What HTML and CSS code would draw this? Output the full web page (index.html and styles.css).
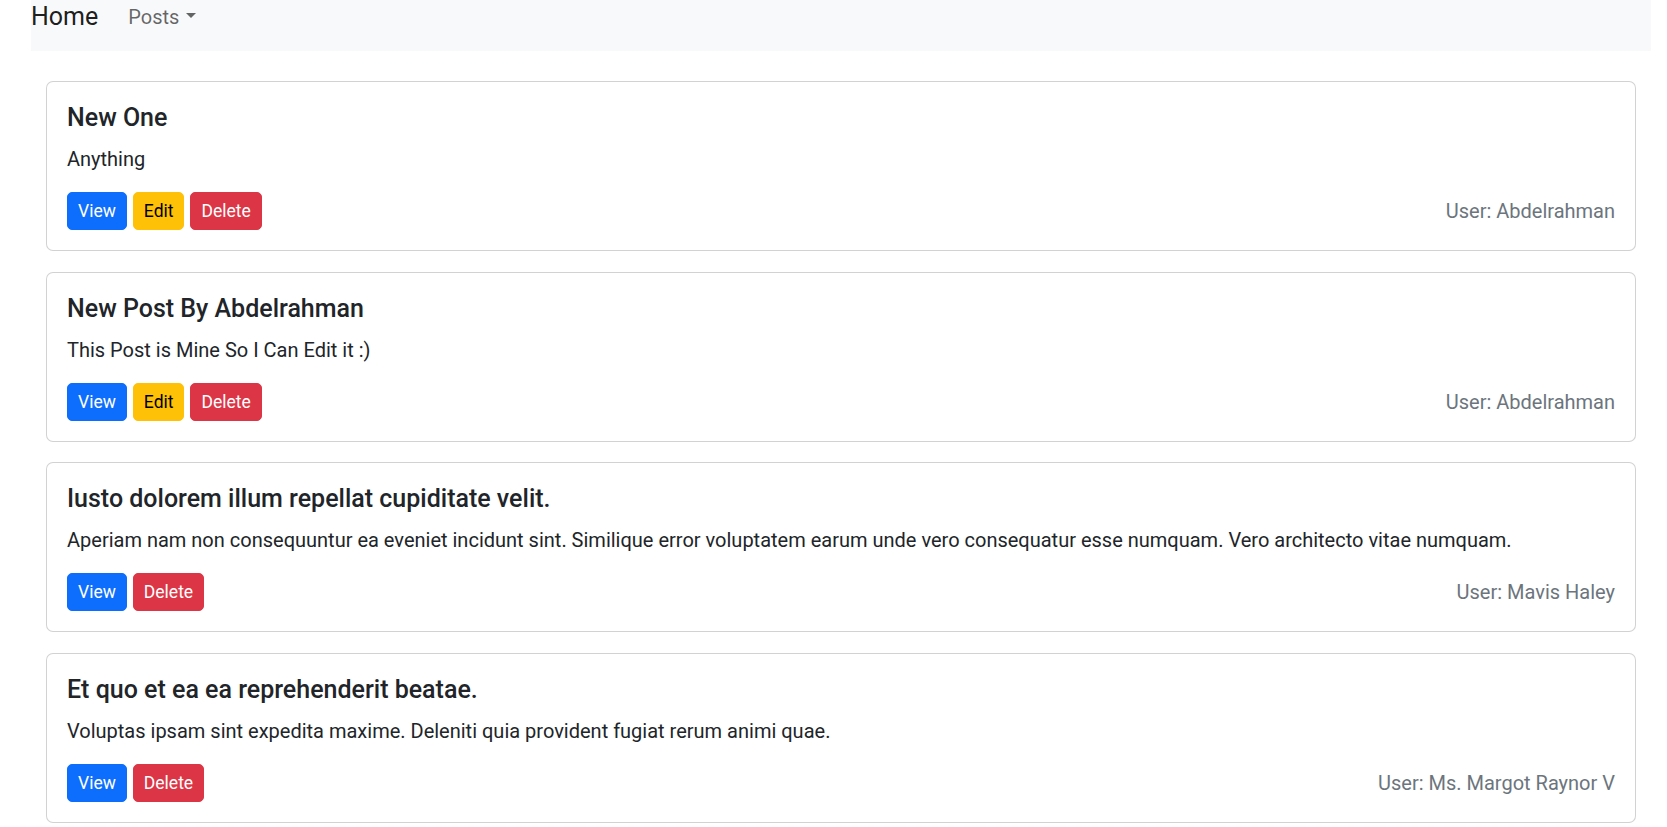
FILE: index.html
```html
<!DOCTYPE html>
<html lang="en">
<head>
<meta charset="utf-8">
<title>Posts</title>
<link rel="stylesheet" href="styles.css">
</head>
<body>
<div class="page">
  <nav class="navbar">
    <a class="brand" href="#">Home</a>
    <a class="nav-link" href="#">Posts<span class="caret"></span></a>
  </nav>
  <main class="container">
    <div class="card">
      <div class="card-body">
        <h5 class="card-title">New One</h5>
        <p class="card-text">Anything</p>
        <div class="card-footer">
          <div class="actions">
            <a class="btn btn-primary" href="#">View</a>
            <a class="btn btn-warning" href="#">Edit</a>
            <a class="btn btn-danger" href="#">Delete</a>
          </div>
          <span class="user">User: Abdelrahman</span>
        </div>
      </div>
    </div>
    <div class="card">
      <div class="card-body">
        <h5 class="card-title">New Post By Abdelrahman</h5>
        <p class="card-text">This Post is Mine So I Can Edit it :)</p>
        <div class="card-footer">
          <div class="actions">
            <a class="btn btn-primary" href="#">View</a>
            <a class="btn btn-warning" href="#">Edit</a>
            <a class="btn btn-danger" href="#">Delete</a>
          </div>
          <span class="user">User: Abdelrahman</span>
        </div>
      </div>
    </div>
    <div class="card">
      <div class="card-body">
        <h5 class="card-title">Iusto dolorem illum repellat cupiditate velit.</h5>
        <p class="card-text">Aperiam nam non consequuntur ea eveniet incidunt sint. Similique error voluptatem earum unde vero consequatur esse numquam. Vero architecto vitae numquam.</p>
        <div class="card-footer">
          <div class="actions">
            <a class="btn btn-primary" href="#">View</a>
            <a class="btn btn-danger" href="#">Delete</a>
          </div>
          <span class="user">User: Mavis Haley</span>
        </div>
      </div>
    </div>
    <div class="card">
      <div class="card-body">
        <h5 class="card-title">Et quo et ea ea reprehenderit beatae.</h5>
        <p class="card-text">Voluptas ipsam sint expedita maxime. Deleniti quia provident fugiat rerum animi quae.</p>
        <div class="card-footer">
          <div class="actions">
            <a class="btn btn-primary" href="#">View</a>
            <a class="btn btn-danger" href="#">Delete</a>
          </div>
          <span class="user">User: Ms. Margot Raynor V</span>
        </div>
      </div>
    </div>
  </main>
</div>
</body>
</html>
```
FILE: styles.css
```css
* { box-sizing: border-box; }

body {
  margin: 0;
  background: #fff;
  color: #212529;
  font-family: Roboto, "Liberation Sans", sans-serif;
  font-size: 20px;
  line-height: 1.5;
}

.page {
  padding: 0 16px 0 31px;
}

.navbar {
  height: 51px;
  background: #f8f9fa;
  display: flex;
  align-items: flex-start;
  padding-top: 2px;
}

.brand {
  font-size: 25px;
  line-height: 30px;
  color: rgba(0, 0, 0, 0.9);
  text-decoration: none;
  margin-right: 20px;
}

.nav-link {
  font-size: 20px;
  line-height: 30px;
  color: rgba(0, 0, 0, 0.6);
  text-decoration: none;
  padding: 0 10px;
  display: flex;
  align-items: center;
}

.caret {
  display: inline-block;
  margin-left: 7px;
  margin-top: -3px;
  width: 0;
  height: 0;
  border-top: 5px solid rgba(0, 0, 0, 0.6);
  border-left: 5.5px solid transparent;
  border-right: 5.5px solid transparent;
}

.container {
  padding: 30px 15px 0;
}

.card {
  border: 1px solid rgba(0, 0, 0, 0.175);
  border-radius: 7px;
  margin-bottom: 20.5px;
  background: #fff;
}

.card-body {
  padding: 21px 20px 20px;
}

.card-title {
  margin: 0 0 11px;
  font-size: 25px;
  line-height: 30px;
  font-weight: 500;
  color: #212529;
}

.card-text {
  margin: 0 0 18px;
  font-size: 20px;
  line-height: 30px;
}

.card-footer {
  display: flex;
  justify-content: space-between;
  align-items: center;
}

.actions {
  display: flex;
  gap: 6px;
}

.btn {
  display: inline-block;
  height: 38px;
  padding: 5px 10px;
  font-size: 17.5px;
  line-height: 26px;
  border: 1px solid transparent;
  border-radius: 5px;
  text-decoration: none;
  color: #fff;
}

.btn-primary { background: #0d6efd; border-color: #0d6efd; }
.btn-warning { background: #ffc107; border-color: #ffc107; color: #000; }
.btn-danger { background: #dc3545; border-color: #dc3545; }

.user {
  color: #6c757d;
  font-size: 20px;
  line-height: 30px;
}
```
